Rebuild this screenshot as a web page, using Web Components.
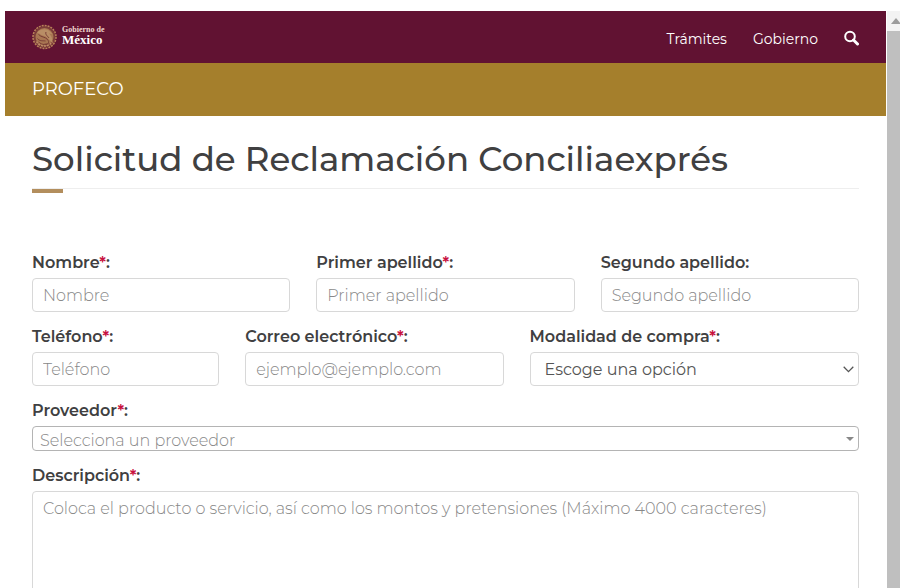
<!DOCTYPE html>
<html lang="es">
<head>
<meta charset="utf-8">
<meta name="viewport" content="width=device-width, initial-scale=1">
<title>Solicitud de Reclamación Conciliaexprés</title>
<style>
  body { margin: 0; background: #fff; color: #404041; font-family: Montserrat, Inter, "Open Sans", sans-serif; font-size: 16px; line-height: 24px; }
</style>
</head>
<body>
<app-window>
  <site-header>
    <site-logo slot="brand"></site-logo>
    <nav-link href="#tramites">Trámites</nav-link>
    <nav-link href="#gobierno">Gobierno</nav-link>
    <search-button></search-button>
  </site-header>
  <agency-bar href="#profeco">PROFECO</agency-bar>
  <claim-form>
    <page-title slot="title">Solicitud de Reclamación Conciliaexprés</page-title>
    <form-field span="4" label="Nombre" required placeholder="Nombre"></form-field>
    <form-field span="4" label="Primer apellido" required placeholder="Primer apellido"></form-field>
    <form-field span="4" label="Segundo apellido" placeholder="Segundo apellido"></form-field>
    <form-field span="3" label="Teléfono" required type="tel" placeholder="Teléfono"></form-field>
    <form-field span="4" label="Correo electrónico" required type="email" placeholder="ejemplo@ejemplo.com"></form-field>
    <form-field span="5" label="Modalidad de compra" required type="select" placeholder="Escoge una opción"></form-field>
    <form-field span="12" label="Proveedor" required type="provider" placeholder="Selecciona un proveedor"></form-field>
    <form-field span="12" label="Descripción" required type="textarea" placeholder="Coloca el producto o servicio, así como los montos y pretensiones (Máximo 4000 caracteres)"></form-field>
  </claim-form>
</app-window>

<script>
const register = (name, html, setup) => {
  const template = document.createElement('template');
  template.innerHTML = html;
  customElements.define(name, class extends HTMLElement {
    constructor() {
      super();
      this.attachShadow({ mode: 'open' }).append(template.content.cloneNode(true));
    }
    connectedCallback() {
      if (setup && !this.ready) { this.ready = true; setup(this, this.shadowRoot); }
    }
  });
};

register('app-window', `
  <style>
    :host { display: flex; height: 100vh; box-sizing: border-box; padding: 11px 0 0 5px; overflow: hidden; }
    .page { flex: 1; min-width: 0; overflow: hidden; }
  </style>
  <div class="page"><slot></slot></div>
  <scroll-rail></scroll-rail>`);

register('scroll-rail', `
  <style>
    :host { display: flex; flex-direction: column; width: 13px; margin-left: 1px; background: #bfbfbf; }
    .up { height: 20px; background: #f3f3f3; display: flex; align-items: center; justify-content: flex-end; }
  </style>
  <div class="up"><svg width="9" height="6" viewBox="0 0 9 6" aria-hidden="true"><path d="M0 6 5 0l5 6z" fill="#9c9c9c"/></svg></div>`);

register('site-header', `
  <style>
    :host { display: flex; align-items: center; justify-content: space-between; height: 52px; padding: 0 27px; background: #611232; color: #fff; }
    nav { display: flex; align-items: center; gap: 26px; padding-top: 4px; }
  </style>
  <slot name="brand"></slot>
  <nav aria-label="Principal"><slot></slot></nav>`);

register('site-logo', `
  <style>
    :host { display: block; }
    a { display: flex; align-items: center; gap: 5px; color: #fff; text-decoration: none; }
    .words { display: flex; flex-direction: column; padding-bottom: 2px; font-family: "Liberation Serif", serif; font-weight: 700; }
    small { font-size: 8px; line-height: 8px; color: #f0d8d0; }
    b { font-size: 13px; line-height: 12px; }
  </style>
  <a href="#inicio">
    <svg width="25" height="26" viewBox="0 0 50 52" fill="none" aria-hidden="true">
      <circle cx="25" cy="26" r="22" fill="#7b3c38"/>
      <circle cx="25" cy="26" r="23" stroke="#b98559" stroke-width="3" stroke-dasharray="4 2"/>
      <circle cx="25" cy="26" r="18" fill="#a87652"/>
      <path d="M10 17c7-7 19-9 26-2l5 5-7-1c5 5 8 11 5 17-5-4-7-10-14-12-5-1-9-4-15-7z" fill="#b98e66"/>
      <path d="M13 21c6 6 13 4 18 10s1 10-6 9M11 29c4 6 11 4 16 5M28 16c-2 5 3 8 6 12M13 36c7 6 16 7 24 2" stroke="#783c35" stroke-width="2"/>
      <path d="M9 35c5 10 22 14 32 0" stroke="#c08e68" stroke-width="3" stroke-dasharray="4 2"/>
    </svg>
    <span class="words"><small>Gobierno de</small><b>México</b></span>
  </a>`);

register('nav-link', `
  <style>
    :host { display: block; font-size: 14px; line-height: 24px; }
    a { color: #fff; text-decoration: none; }
  </style>
  <a><slot></slot></a>`,
  (host, root) => { root.querySelector('a').href = host.getAttribute('href'); });

register('search-button', `
  <style>
    :host { display: block; }
    button { display: block; border: 0; padding: 0; background: none; color: #fff; cursor: pointer; }
    svg { display: block; }
  </style>
  <button type="button" aria-label="Buscar">
    <svg width="15" height="18" viewBox="0 0 15 18" fill="none" stroke="currentColor">
      <circle cx="6" cy="6.5" r="4.8" stroke-width="2"/>
      <path d="m9.5 10 4 4" stroke-width="3" stroke-linecap="round"/>
    </svg>
  </button>`);

register('agency-bar', `
  <style>
    :host { display: flex; align-items: center; height: 53px; padding: 0 27px; box-sizing: border-box; background: #a57f2c; font-size: 18px; }
    a { color: #fff; text-decoration: none; padding-bottom: 2px; }
  </style>
  <a><slot></slot></a>`,
  (host, root) => { root.querySelector('a').href = host.getAttribute('href'); });

register('page-title', `
  <style>
    :host { display: block; }
    h1 { margin: 0; font-size: 34px; line-height: 40px; font-weight: 500; padding-bottom: 9px; border-bottom: 1px solid #eee; }
    .accent { width: 31px; height: 4px; background: #b38e5d; }
  </style>
  <h1><slot></slot></h1>
  <div class="accent"></div>`);

register('claim-form', `
  <style>
    :host { display: block; padding: 23px 27px 40px; }
    form { display: grid; grid-template-columns: repeat(12, minmax(0, 1fr)); column-gap: 26px; row-gap: 12px; padding-top: 57px; }
  </style>
  <slot name="title"></slot>
  <form><slot></slot></form>`);

register('form-field', `
  <style>
    :host { display: flex; flex-direction: column; gap: 2px; min-width: 0; }
    label { font-size: 16px; line-height: 26px; font-weight: 600; }
    .req { color: #c8103e; }
    .box { display: grid; align-items: center; }
    .box > * { grid-area: 1 / 1; }
    input, select, textarea { display: block; width: 100%; min-width: 0; box-sizing: border-box; margin: 0; height: 34px; padding: 0 10px; border: 1px solid #d8d8d8; border-radius: 4px; background: #fff; color: #555; font: inherit; appearance: none; outline-color: #b38e5d; }
    input, textarea, .provider { font-weight: 300; }
    ::placeholder { color: #888; opacity: 1; }
    select { padding: 2px 30px 0 14px; font-weight: 400; }
    textarea { height: 160px; padding: 5px 10px; resize: none; }
    .provider { height: 25px; padding: 2px 24px 0 7px; border-color: #b4b4b4; color: #888; }
    svg { justify-self: end; margin-right: 5px; pointer-events: none; }
  </style>
  <label for="control"></label>
  <div class="box"></div>`,
  (host, root) => {
    const type = host.getAttribute('type') || 'text';
    const hint = host.getAttribute('placeholder');
    const isSelect = type === 'select' || type === 'provider';
    host.style.gridColumn = 'span ' + host.getAttribute('span');
    const label = root.querySelector('label');
    label.textContent = host.getAttribute('label');
    if (host.hasAttribute('required')) {
      const mark = document.createElement('span');
      mark.className = 'req';
      mark.textContent = '*';
      label.append(mark);
    }
    label.append(':');
    const control = document.createElement(isSelect ? 'select' : type === 'textarea' ? 'textarea' : 'input');
    control.id = 'control';
    const box = root.querySelector('.box');
    if (isSelect) {
      control.add(new Option(hint, ''));
      control.className = type;
    } else {
      control.placeholder = hint;
      if (type !== 'textarea') control.type = type;
      else control.maxLength = 4000;
    }
    control.required = host.hasAttribute('required');
    box.append(control);
    if (type === 'select') box.insertAdjacentHTML('beforeend', '<svg width="11" height="7" viewBox="0 0 11 7" fill="none" stroke="#555" stroke-width="1.3" aria-hidden="true"><path d="M.7.8 5.5 5.6 10.3.8"/></svg>');
    if (type === 'provider') box.insertAdjacentHTML('beforeend', '<svg width="8" height="4" viewBox="0 0 8 4" fill="#888" aria-hidden="true"><path d="M0 0h8L4 4z"/></svg>');
  });
</script>
</body>
</html>
